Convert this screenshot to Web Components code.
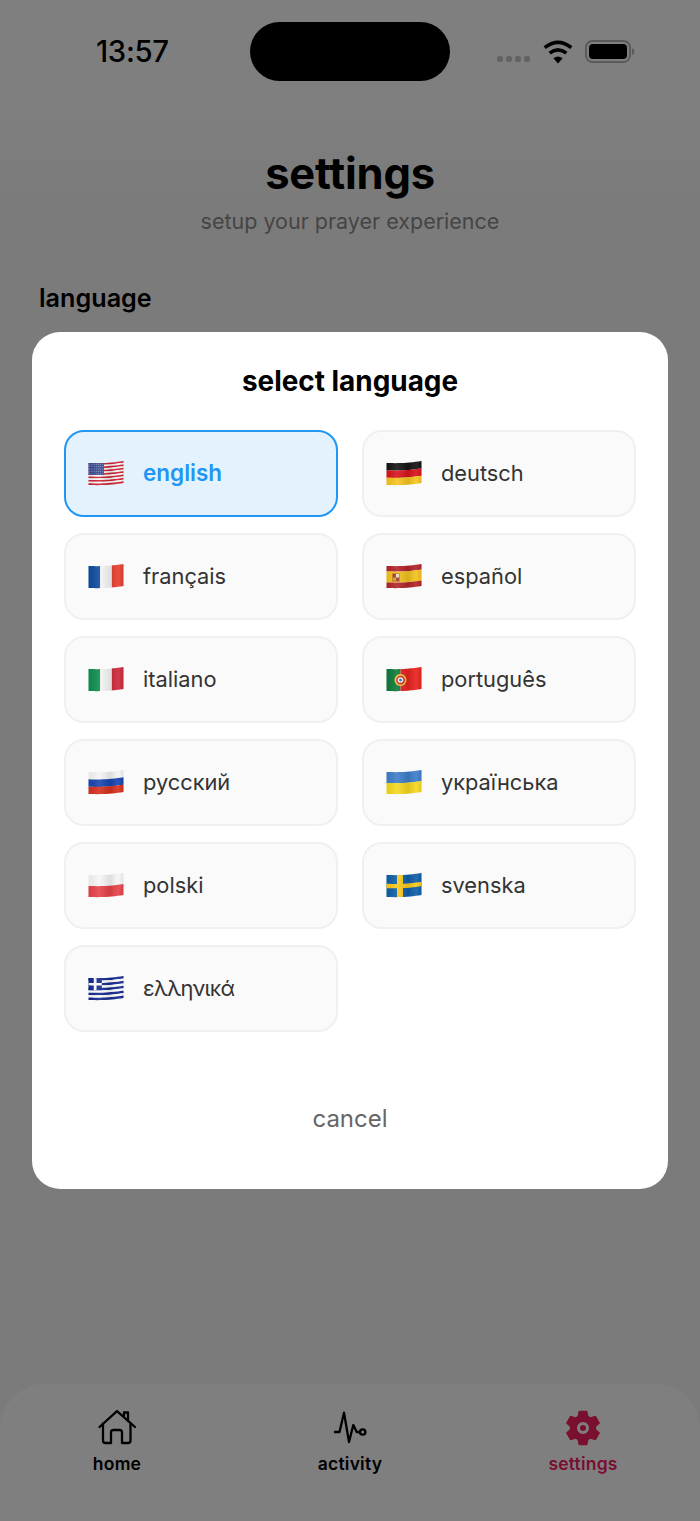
<!DOCTYPE html>
<html lang="en">
<head>
<meta charset="utf-8">
<title>settings</title>
<style>
html, body { margin: 0; padding: 0; background: #fff; }
body { width: 700px; height: 1521px; overflow: hidden; font-family: Inter, "Noto Sans", sans-serif; }
</style>
</head>
<body>
<app-screen>
  <status-bar slot="status" time="13:57"></status-bar>
  <page-header slot="header" heading="settings" subtitle="setup your prayer experience"></page-header>
  <section-label slot="section">language</section-label>
  <tab-bar slot="tabs">
    <tab-item label="home" icon="home"></tab-item>
    <tab-item label="activity" icon="activity"></tab-item>
    <tab-item label="settings" icon="gear" active></tab-item>
  </tab-bar>
  <language-dialog slot="dialog" heading="select language" cancel="cancel">
    <language-option flag="us" selected>english</language-option>
    <language-option flag="de">deutsch</language-option>
    <language-option flag="fr">français</language-option>
    <language-option flag="es">español</language-option>
    <language-option flag="it">italiano</language-option>
    <language-option flag="pt">português</language-option>
    <language-option flag="ru">русский</language-option>
    <language-option flag="ua">українська</language-option>
    <language-option flag="pl">polski</language-option>
    <language-option flag="se">svenska</language-option>
    <language-option flag="gr" style="letter-spacing: -.75px">ελληνικά</language-option>
  </language-dialog>
</app-screen>

<script>
/* screen: page underneath + dimmed overlay with the dialog on top */
class AppScreen extends HTMLElement {
    constructor() {
        super();
        this.attachShadow({ mode: "open" });
        this.shadowRoot.innerHTML = `
        <style>
        :host { display: block; position: relative; width: 700px; height: 1521px; overflow: hidden;
            background: linear-gradient(#ffffff 0, #ffffff 90px, #f7f7f7 200px, #f6f6f6 100%); }
        .page { display: flex; flex-direction: column; height: 100%; }
        .grow { flex: 1; }
        .overlay { position: absolute; inset: 0; background: rgba(0,0,0,.5);
            display: flex; align-items: center; justify-content: center; }
        </style>
        <div class="page">
            <slot name="status"></slot>
            <slot name="header"></slot>
            <slot name="section"></slot>
            <div class="grow"></div>
            <slot name="tabs"></slot>
        </div>
        <div class="overlay"><slot name="dialog"></slot></div>`;
    }
}

class StatusBar extends HTMLElement {
    constructor() {
        super();
        this.attachShadow({ mode: "open" });
        this.shadowRoot.innerHTML = `
        <style>
        :host { display: grid; grid-template-columns: 250px 200px 250px; height: 100px; box-sizing: border-box; padding-top: 22px; }
        .time { font: 500 29.3px/60px Inter, sans-serif; color: #000; padding-left: 96px; letter-spacing: -.3px; }
        .island { height: 59px; background: #000; border-radius: 29.5px; }
        .right { display: flex; align-items: flex-start; padding-left: 47px; }
        .dots { display: flex; gap: 3px; margin-top: 34px; }
        .dots i { width: 6px; height: 6px; border-radius: 2px; background: #c6c6c6; }
        svg { display: block; }
        .wifi { margin: 18px 0 0 13px; }
        .battery { margin: 18px 0 0 12px; }
        </style>
        <div class="time"></div>
        <div class="island"></div>
        <div class="right">
            <div class="dots"><i></i><i></i><i></i><i></i></div>
            <svg class="wifi" width="30" height="24" viewBox="0 0 30 24">
                <path d="M15 23.5 L10.4 18.2 Q15 14.6 19.6 18.2 Z" fill="#000"/>
                <path d="M6.6 13.2 Q15 6.6 23.4 13.2" fill="none" stroke="#000" stroke-width="3.6"/>
                <path d="M1.7 7.6 Q15 -2.8 28.3 7.6" fill="none" stroke="#000" stroke-width="3.6"/>
            </svg>
            <svg class="battery" width="50" height="23" viewBox="0 0 50 23">
                <rect x="1" y="1" width="44" height="21" rx="6.5" fill="none" stroke="#b5b5b5" stroke-width="2"/>
                <rect x="4" y="4" width="38" height="15" rx="4" fill="#000"/>
                <path d="M47 8 Q49.5 9 49.5 11.5 Q49.5 14 47 15 Z" fill="#b5b5b5"/>
            </svg>
        </div>`;
        this.shadowRoot.querySelector(".time").textContent = this.getAttribute("time");
    }
}

class PageHeader extends HTMLElement {
    constructor() {
        super();
        this.attachShadow({ mode: "open" });
        this.shadowRoot.innerHTML = `
        <style>
        :host { display: block; text-align: center; padding-top: 46px; }
        h1 { margin: 0; font: 700 43.5px/54px Inter, sans-serif; color: #000; letter-spacing: -.2px; }
        p { margin: 7px 0 0; font: 400 21.5px/28px Inter, sans-serif; color: #8a8a8a; }
        </style>
        <h1></h1>
        <p></p>`;
        this.shadowRoot.querySelector("h1").textContent = this.getAttribute("heading");
        this.shadowRoot.querySelector("p").textContent = this.getAttribute("subtitle");
    }
}

class SectionLabel extends HTMLElement {
    constructor() {
        super();
        this.attachShadow({ mode: "open" });
        this.shadowRoot.innerHTML = `
        <style>
        :host { display: block; padding: 47px 39px 0; font: 600 25.2px/32px Inter, sans-serif; color: #000; }
        </style>
        <slot></slot>`;
    }
}

function gearPath(cx, cy, outer, inner) {
    const pts = [];
    for (let i = 0; i < 6; i++) {
        const a = -90 + i * 60;
        [[inner, -23], [outer, -13], [outer, 13], [inner, 23]].forEach(([r, d]) => {
            const t = (a + d) * Math.PI / 180;
            pts.push((cx + r * Math.cos(t)).toFixed(2) + " " + (cy + r * Math.sin(t)).toFixed(2));
        });
    }
    return "M" + pts.join(" L") + " Z";
}

const TAB_ICONS = {
    home: `<svg width="40" height="40" viewBox="0 0 40 40" fill="none" stroke="currentColor" stroke-width="2.3" stroke-linecap="round" stroke-linejoin="round">
        <path d="M2.5 19 L20 3.2 L38 19"/>
        <path d="M6 15.5 V32.5 Q6 35 8.5 35 H14 V24.5 Q14 22 16.5 22 H22.5 Q25 22 25 24.5 V35 H31 Q33.5 35 33.5 32.5 V15.5"/>
        <path d="M27 8 V4.5 H31 V13"/>
    </svg>`,
    activity: `<svg width="40" height="40" viewBox="0 0 40 40" fill="none" stroke="currentColor" stroke-width="2.3" stroke-linejoin="round">
        <path d="M4 24 H9.5 L14 4.7 L19 34 L23.3 17 L26.7 24 H30"/>
        <circle cx="32.7" cy="24" r="2.7"/>
    </svg>`,
    gear: `<svg width="40" height="40" viewBox="0 0 40 40">
        <path fill="currentColor" stroke="currentColor" stroke-width="1.2" stroke-linejoin="round" d="${gearPath(20, 20, 17, 12.6)}"/>
        <circle cx="20" cy="20" r="4.5" fill="none" stroke="#fff" stroke-width="3"/>
    </svg>`
};

class TabBar extends HTMLElement {
    constructor() {
        super();
        this.attachShadow({ mode: "open" });
        this.shadowRoot.innerHTML = `
        <style>
        :host { display: grid; grid-template-columns: 234px 232px 234px; height: 137px; box-sizing: border-box;
            background: #fff; border-radius: 45px 45px 0 0; padding-top: 24px; }
        </style>
        <slot></slot>`;
    }
}

class TabItem extends HTMLElement {
    constructor() {
        super();
        this.attachShadow({ mode: "open" });
        this.shadowRoot.innerHTML = `
        <style>
        :host { display: flex; flex-direction: column; align-items: center; color: #000; font: 600 17.5px/22px Inter, sans-serif; }
        :host([active]) { color: #f2205f; }
        .icon { height: 40px; }
        svg { display: block; }
        span { margin-top: 5px; white-space: nowrap; letter-spacing: .2px; }
        </style>
        <div class="icon"></div>
        <span></span>`;
        this.shadowRoot.querySelector(".icon").innerHTML = TAB_ICONS[this.getAttribute("icon")];
        this.shadowRoot.querySelector("span").textContent = this.getAttribute("label");
    }
}

/* flags: every shape is warped along the same wave, like the emoji ones */
const FW = 36, FH = 26;
function warp(u, v) {
    const w = 1 - 2 * u + 0.9 * Math.sin(Math.PI * u);
    return [0.5 + u * 35, 2 + v * 22 + w];
}
function quad(u0, v0, u1, v1, fill) {
    const pts = [], n = 12;
    for (let i = 0; i <= n; i++) pts.push(warp(u0 + (u1 - u0) * i / n, v0));
    for (let i = n; i >= 0; i--) pts.push(warp(u0 + (u1 - u0) * i / n, v1));
    return `<polygon fill="${fill}" points="${pts.map(p => p[0].toFixed(2) + "," + p[1].toFixed(2)).join(" ")}"/>`;
}
function hbands(colors) {
    return colors.map((c, i) => quad(0, i / colors.length, 1, (i + 1) / colors.length + (i < colors.length - 1 ? .005 : 0), c)).join("");
}
function vbands(colors) {
    return colors.map((c, i) => quad(i / colors.length, 0, (i + 1) / colors.length + (i < colors.length - 1 ? .005 : 0), 1, c)).join("");
}
function dot(u, v, r, fill) {
    const p = warp(u, v);
    return `<circle cx="${p[0].toFixed(2)}" cy="${p[1].toFixed(2)}" r="${r}" fill="${fill}"/>`;
}
function usFlag() {
    const stripes = [];
    for (let i = 0; i < 13; i++) stripes.push(i % 2 ? "#f7f7f7" : "#d0202f");
    let s = hbands(stripes) + quad(0, 0, .44, 7 / 13, "#3a4a8f");
    for (let r = 0; r < 5; r++) {
        for (let c = 0; c < 7; c++) s += dot(.035 + c * .062, .05 + r * .11, .45, "#c9d2ee");
    }
    return s;
}
function grFlag() {
    const stripes = [];
    for (let i = 0; i < 9; i++) stripes.push(i % 2 ? "#ffffff" : "#14298f");
    return hbands(stripes) + quad(0, 0, .38, 5 / 9, "#14298f")
        + quad(.15, 0, .23, 5 / 9, "#fff") + quad(0, 2 / 9, .38, 3 / 9, "#fff");
}
const FLAGS = {
    us: usFlag,
    gr: grFlag,
    de: () => hbands(["#141414", "#d8141c", "#f6c51f"]),
    fr: () => vbands(["#0f4c9c", "#f8f8f8", "#e5402f"]),
    it: () => vbands(["#0f8f4d", "#f8f8f8", "#cc2b3a"]),
    ru: () => hbands(["#f5f5f5", "#1746b0", "#d7301f"]),
    ua: () => hbands(["#3f7ecb", "#f6d81f"]),
    pl: () => hbands(["#f6f6f6", "#e6434a"]),
    es: () => quad(0, 0, 1, .25, "#b3242c") + quad(0, .25, 1, .75, "#f3c21d") + quad(0, .75, 1, 1, "#b3242c")
        + quad(.17, .34, .37, .7, "#a8392c") + quad(.27, .36, .36, .52, "#e8dcc0") + quad(.18, .52, .27, .68, "#c9a13b"),
    pt: () => quad(0, 0, .4, 1, "#0f7a3c") + quad(.4, 0, 1, 1, "#e8231f")
        + dot(.4, .5, 6, "#f1c93a") + dot(.4, .5, 4.4, "#d4232a") + dot(.4, .5, 2.8, "#f4f4f4") + dot(.4, .5, 1.4, "#3a62b4"),
    se: () => quad(0, 0, 1, 1, "#0f5fa8") + quad(.3, 0, .47, 1, "#fbc91b") + quad(0, .4, 1, .6, "#fbc91b")
};

class FlagIcon extends HTMLElement {
    constructor() {
        super();
        this.attachShadow({ mode: "open" });
    }
    connectedCallback() {
        const shapes = FLAGS[this.getAttribute("code")]();
        const shade = quad(0, 0, 1, 1, "url(#shade)");
        this.shadowRoot.innerHTML = `
        <style>:host { display: block; width: ${FW}px; height: ${FH}px; } svg { display: block; }</style>
        <svg width="${FW}" height="${FH}" viewBox="0 0 ${FW} ${FH}">
            <defs>
                <linearGradient id="shade" x1="0" x2="1" y1="0" y2="0">
                    <stop offset="0" stop-color="#000" stop-opacity=".06"/>
                    <stop offset=".3" stop-color="#fff" stop-opacity=".1"/>
                    <stop offset=".62" stop-color="#000" stop-opacity=".1"/>
                    <stop offset=".85" stop-color="#fff" stop-opacity=".08"/>
                    <stop offset="1" stop-color="#000" stop-opacity=".08"/>
                </linearGradient>
            </defs>
            ${shapes}
            ${shade}
        </svg>`;
    }
}

class LanguageOption extends HTMLElement {
    constructor() {
        super();
        this.attachShadow({ mode: "open" });
        this.shadowRoot.innerHTML = `
        <style>
        :host { display: flex; align-items: center; gap: 19px; height: 87px; box-sizing: border-box; padding: 0 22px 0;
            border: 2px solid #f0f0f0; border-radius: 20px; background: #fafafa;
            font: 400 21.8px/28px Inter, "Noto Sans", sans-serif; color: #333; white-space: nowrap; }
        :host([selected]) { border-color: #2196f3; background: #e3f2fd; color: #2196f3; font-weight: 600; font-size: 22.5px; }
        .label { margin-top: -1px; }
        flag-icon { margin-top: -1px; }
        </style>
        <flag-icon code="${this.getAttribute("flag")}"></flag-icon>
        <span class="label"><slot></slot></span>`;
    }
}

class LanguageDialog extends HTMLElement {
    constructor() {
        super();
        this.attachShadow({ mode: "open" });
        this.shadowRoot.innerHTML = `
        <style>
        :host { display: block; width: 636px; box-sizing: border-box; padding: 32px; background: #fff; border-radius: 28px; }
        h2 { margin: 0 0 32px; text-align: center; font: 700 27.9px/35px Inter, sans-serif; color: #000; height: 34px; }
        .grid { display: grid; grid-template-columns: 274px 274px; gap: 16px 24px; }
        .cancel { margin-top: 48px; padding: 24px 0; text-align: center; font: 400 24px/29px Inter, sans-serif; color: #666; }
        </style>
        <h2></h2>
        <div class="grid"><slot></slot></div>
        <div class="cancel"></div>`;
        this.shadowRoot.querySelector("h2").textContent = this.getAttribute("heading");
        this.shadowRoot.querySelector(".cancel").textContent = this.getAttribute("cancel");
    }
}

customElements.define("flag-icon", FlagIcon);
customElements.define("app-screen", AppScreen);
customElements.define("status-bar", StatusBar);
customElements.define("page-header", PageHeader);
customElements.define("section-label", SectionLabel);
customElements.define("tab-bar", TabBar);
customElements.define("tab-item", TabItem);
customElements.define("language-option", LanguageOption);
customElements.define("language-dialog", LanguageDialog);
</script>
</body>
</html>
